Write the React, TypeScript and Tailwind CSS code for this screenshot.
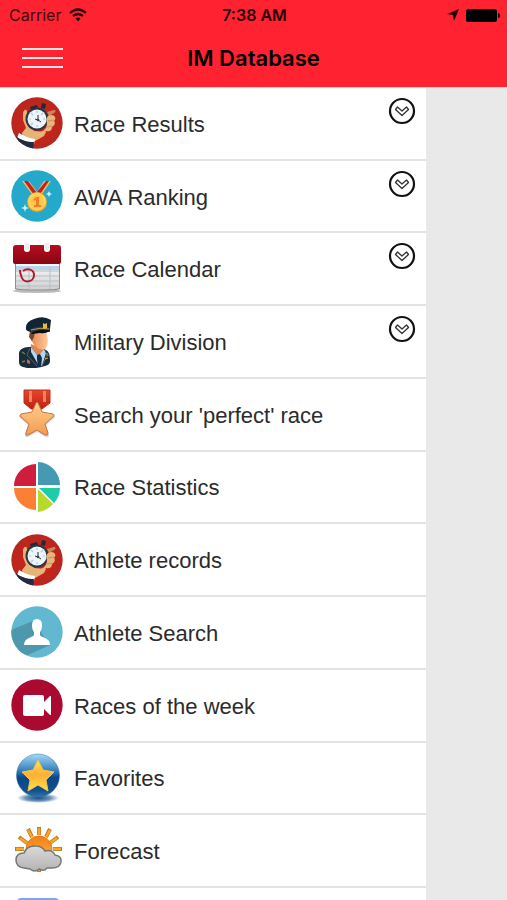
import React from "react";

function StopwatchIcon() {
  return (
    <svg viewBox="0 0 52 52" className="size-[52px]" aria-hidden="true">
      <defs>
        <clipPath id="watchDisc">
          <circle cx="26" cy="26" r="25.7" />
        </clipPath>
        <radialGradient id="watchRed">
          <stop offset="0.6" stopColor="#c5241c" />
          <stop offset="1" stopColor="#b5281f" />
        </radialGradient>
      </defs>
      <circle cx="26" cy="26" r="25.7" fill="url(#watchRed)" />
      <g clipPath="url(#watchDisc)">
        <path d="M12 16c1-4 4-4 4-1l1 8 6 11 12 1-2 4-7 4-4 2-10-5-1-4 4-5-3-8z" fill="#e6b377" />
        <path d="M8 36q8 5 16 6l-1 5L6 41z" fill="#fff" />
        <path d="M5 39c5 5 12 6 18 6l-1 9H8z" fill="#202c44" />
        <path d="m31 6 4 1-1 5-4-1zM19 10l7-2 1 3-7 2z" fill="#222936" />
        <circle cx="26" cy="22" r="11.500" fill="#2c3440" />
        <circle cx="26" cy="22" r="9.500" fill="#edf5fb" />
        <g stroke="#a5cce4" strokeWidth="1.200">
          <path d="M26 14v2M26 28v2M18 22h2M32 22h2M20 16l2 2M32 16l-2 2M20 28l2-2" />
        </g>
        <path d="m24 22 3 1 3 2M27 23v-5" stroke="#27313d" strokeWidth="1" fill="none" />
        <circle cx="27" cy="23" r="1.300" fill="#354352" />
        <path d="m36 15 7-2c2 0 2 2 0 3l-5 3z" fill="#c98858" />
        <path d="M37 19c3-2 6-1 7 1 1 2-1 4-1 4 2 2 0 5-2 6 0 4-3 5-6 4-2 4-8 7-12 4l9-4c3-2 4-5 4-8-1-2-1-5 1-7z" fill="#e8b67a" />
        <path d="m37 24 6-1M36 30l5-1" stroke="#cb925b" strokeWidth="1" />
      </g>
    </svg>
  );
}

function RankingIcon() {
  return (
    <svg viewBox="0 0 52 52" className="size-[52px]" aria-hidden="true">
      <circle cx="26" cy="26" r="25.700" fill="#25a9cb" />
      <path d="m11 11 7 0 9 12-4 4zM33 11h7L29 27l-4-4z" fill="#f1bc4f" />
      <path d="m13 11 4 0 9 12-3 2zM35 11h3L28 26l-3-3z" fill="#c51f2c" />
      <circle cx="26" cy="32" r="10" fill="#eda72c" />
      <circle cx="26" cy="31.500" r="9" fill="#ffd65a" />
      <circle cx="26" cy="32" r="7" fill="#ffc847" />
      <path d="m22.500 29 3-2h2.500v8h2v2h-7v-2h2v-5l-2 1z" fill="#ef7f2d" />
      <path d="m14 34 1 3 3 1-3 1-1 3-1-3-3-1 3-1zM38 21l1 2 2 1-2 1-1 2-1-2-2-1 2-1z" fill="#c5f4fc" />
    </svg>
  );
}

function CalendarIcon() {
  return (
    <svg viewBox="0 0 52 52" className="size-[52px]" aria-hidden="true">
      <defs>
        <linearGradient id="calRed" x2="0" y2="1">
          <stop stopColor="#b50e20" />
          <stop offset="1" stopColor="#870611" />
        </linearGradient>
        <linearGradient id="calPage" x2="0" y2="1">
          <stop stopColor="#f8fafc" />
          <stop offset="1" stopColor="#ced0d1" />
        </linearGradient>
      </defs>
      <ellipse cx="26" cy="48" rx="24" ry="2" fill="#bbb" />
      <path d="M4 20h45v26c0 2-45 2-45 0z" fill="#8c8e90" />
      <path d="M5 20h43v25c0 2-43 2-43 0z" fill="url(#calPage)" />
      <path d="M5 23h43v4H5z" fill="#b9d6e9" />
      <path d="M5 28h43M5 33h43M5 38h43M5 43h43M18 24v22M39 24v22" stroke="#b9bec2" />
      <path d="M2 5q0-3 3-3h8v4q0 3 3 3t3-3V2h14v4q0 3 3 3t3-3V2h8q3 0 3 3v14q0 2-2 2H4q-2 0-2-2z" fill="url(#calRed)" />
      <path d="M14 0h4v6q-2 3-4 0zM34 0h4v6q-2 3-4 0z" fill="#eee" />
      <path d="M9 27q0 3 1 5c1 9 13 8 13 0 0-6-7-7-11-4" fill="none" stroke="#b21928" strokeWidth="2" />
    </svg>
  );
}

function OfficerIcon() {
  return (
    <svg viewBox="0 0 52 52" className="size-[52px]" aria-hidden="true">
      <defs>
        <linearGradient id="face">
          <stop stopColor="#e88752" />
          <stop offset="1" stopColor="#ffc99c" />
        </linearGradient>
      </defs>
      <path d="m20 28 13 5 1 8-7 4-8-10z" fill="#dd8653" />
      <path d="M8 37c1-5 6-6 12-6l7 9 6-7c5 2 6 5 6 12q0 4-5 5-13 4-22 1-4-1-4-5 0-4 0-9z" fill="#182c3c" />
      <path d="m20 31 7 9 6-7 2 4-4 13h-3l-8-14z" fill="#b6d5ef" />
      <path d="m26 39 3-1 2 4-1 9h-3l-1-8z" fill="#152d45" />
      <path d="m19 32-3 7 10 11M34 34l2 5-5 11" fill="none" stroke="#52616b" />
      <path d="M21 16h14c3 7 2 14-1 17q-5 2-10-3l-4-6z" fill="url(#face)" />
      <path d="M19 15h5l-1 6-2 4-3-4z" fill="#76462d" />
      <path d="M15 13q-1-7 8-10 9-4 17 1l-1 9q-11-2-19 3-5-1-5-3z" fill="#102434" />
      <path d="M19 13q9-4 20-1v4q-10-2-18 1z" fill="#293849" />
      <path d="M20 17q8-4 19-3-3 4-10 3l-8 1z" fill="#080f18" />
      <path d="M20 14q9-3 18-1" stroke="#bf9a32" strokeWidth="1" fill="none" />
      <path d="m32 7 2 1 2-1v5l-2 1-2-1z" fill="#e7ba39" />
      <path d="m11 36 3 2M36 37l1 3M11 46l3-1" stroke="#71882f" strokeWidth="1.500" />
      <path d="m16 43 3 2v3l-3-1z" fill="#be6a58" />
      <path d="m34 43 3-1" stroke="#b7bd44" />
    </svg>
  );
}

function StarMedalIcon() {
  return (
    <svg viewBox="0 0 52 52" className="size-[52px]" aria-hidden="true">
      <defs>
        <linearGradient id="ribbonRed" x2="0" y2="1">
          <stop stopColor="#e94528" />
          <stop offset="1" stopColor="#bc2016" />
        </linearGradient>
        <linearGradient id="bronze" x2="0" y2="1">
          <stop stopColor="#ffd18f" />
          <stop offset="1" stopColor="#f39a50" />
        </linearGradient>
      </defs>
      <path d="M13 2h26v13l-8 6H20l-7-6z" fill="url(#ribbonRed)" stroke="#bd311f" />
      <path d="M18 3h3v11h-3zM32 3h3v11h-3z" fill="#f38762" />
      <path d="m26 14 5 10 12 2q2 1 0 3l-8 7 3 10q0 3-3 2l-9-5-9 5q-3 1-3-2l3-10-8-7q-2-2 0-3l12-2z" fill="#888" opacity="0.350" transform="translate(0 1)" />
      <path d="m25 15 1-1 1 1 4 9 11 2q2 1 0 3l-8 7 3 9q0 3-3 2l-8-5-9 5q-3 1-2-2l3-9-8-7q-2-2 0-3l11-2z" fill="url(#bronze)" stroke="#c77442" strokeWidth="1" />
    </svg>
  );
}

function PieIcon() {
  return (
    <svg viewBox="0 0 52 52" className="size-[52px]" aria-hidden="true">
      <path d="M25 25V3A22 22 0 0 0 3 25z" fill="#cf1d3d" />
      <path d="M27 24V1a23 23 0 0 1 22 23z" fill="#4699b3" />
      <path d="M25 27v22A22 22 0 0 1 3 27z" fill="#fb8035" />
      <path d="M28 27h21a23 23 0 0 1-6 15z" fill="#1fcca9" />
      <path d="M27 28v23q9-1 15-8z" fill="#b7d92d" />
    </svg>
  );
}

function AthleteIcon() {
  return (
    <svg viewBox="0 0 52 52" className="size-[52px]" aria-hidden="true">
      <defs>
        <clipPath id="athleteDisc">
          <circle cx="26" cy="26" r="25.700" />
        </clipPath>
      </defs>
      <circle cx="26" cy="26" r="25.700" fill="#62b8d0" />
      <path d="M22 15 0 24v23l17 2 22-10z" fill="#4d98ac" clipPath="url(#athleteDisc)" />
      <path d="M21 19q0-6 5-6t5 6q0 5-2 7v3q0 1 5 3 5 2 5 7H13q0-5 5-7 5-2 5-3v-3q-2-2-2-7z" fill="white" />
    </svg>
  );
}

function VideoIcon() {
  return (
    <svg viewBox="0 0 52 52" className="size-[52px]" aria-hidden="true">
      <circle cx="26" cy="26" r="25.700" fill="#aa0930" />
      <path d="M14 16h17q2 0 2 2v5l6-6h1v19h-1l-6-6v5q0 2-2 2H14q-2 0-2-2V18q0-2 2-2z" fill="#fff" />
    </svg>
  );
}

function FavoriteIcon() {
  return (
    <svg viewBox="0 0 52 52" className="size-[52px]" aria-hidden="true">
      <defs>
        <linearGradient id="ballBlue" x2="0" y2="1">
          <stop stopColor="#a2daf8" />
          <stop offset="0.400" stopColor="#337bb8" />
          <stop offset="0.550" stopColor="#0a458a" />
          <stop offset="0.850" stopColor="#11528c" />
          <stop offset="1" stopColor="#2c76ae" />
        </linearGradient>
        <linearGradient id="starGold" x2="0" y2="1">
          <stop stopColor="#ffe64f" />
          <stop offset="0.480" stopColor="#ffae35" />
          <stop offset="1" stopColor="#ffe34c" />
        </linearGradient>
        <radialGradient id="ballShade">
          <stop stopColor="#174f88" />
          <stop offset="0.600" stopColor="#6c92b8" />
          <stop offset="1" stopColor="#fff" />
        </radialGradient>
      </defs>
      <ellipse cx="27" cy="46" rx="21" ry="5" fill="url(#ballShade)" />
      <circle cx="27" cy="23.500" r="21.500" fill="url(#ballBlue)" stroke="#296c9e" strokeWidth="0.500" />
      <path d="m27 8 5 10 11 2-8 8 2 11-10-6-10 6 2-11-8-8 11-2z" fill="url(#starGold)" stroke="#f3c344" />
    </svg>
  );
}

function ForecastIcon() {
  return (
    <svg viewBox="0 0 52 52" className="size-[52px]" aria-hidden="true">
      <defs>
        <linearGradient id="sunGold" x2="0" y2="1">
          <stop stopColor="#f37b18" />
          <stop offset="1" stopColor="#ffc03b" />
        </linearGradient>
        <linearGradient id="cloudGray" x2="0" y2="1">
          <stop stopColor="#d9d9d9" />
          <stop offset="1" stopColor="#b4b4b4" />
        </linearGradient>
      </defs>
      <path d="M28 2v8M17 4l4 8M39 4l-4 8M8 12l8 6M47 12l-8 6M4 24h9M51 24h-9M28 41v6M17 42l2-3M39 42l-2-3" stroke="#b18032" strokeWidth="4" />
      <path d="M28 3v7M17 5l4 7M39 5l-4 7M9 13l7 5M46 13l-7 5M5 24h8M50 24h-8M28 41v5M17 41l2-2M39 41l-2-2" stroke="#ffa51c" strokeWidth="2.500" />
      <circle cx="28" cy="24" r="13" fill="url(#sunGold)" stroke="#e27d1d" />
      <path d="M13 43q-8-1-8-8t8-7q3-8 12-7 6 0 9 5 7-2 10 4 7 1 6 7t-9 6h-5q-3 4-8 1-4 4-9 0z" fill="url(#cloudGray)" stroke="#777" strokeWidth="1.500" />
    </svg>
  );
}

function ChevronBadge() {
  return (
    <svg viewBox="0 0 28 28" className="size-7" fill="none" aria-hidden="true">
      <circle cx="14" cy="14" r="12" stroke="#111" strokeWidth="2.200" />
      <path d="m7.500 12.500 2-2.500 4.500 4 4.500-4 2 2.500-6.500 6z" stroke="#333" strokeWidth="1.300" strokeLinejoin="round" />
    </svg>
  );
}

const items = [
  { label: "Race Results", Icon: StopwatchIcon, expandable: true },
  { label: "AWA Ranking", Icon: RankingIcon, expandable: true },
  { label: "Race Calendar", Icon: CalendarIcon, expandable: true },
  { label: "Military Division", Icon: OfficerIcon, expandable: true },
  { label: "Search your 'perfect' race", Icon: StarMedalIcon },
  { label: "Race Statistics", Icon: PieIcon },
  { label: "Athlete records", Icon: StopwatchIcon },
  { label: "Athlete Search", Icon: AthleteIcon },
  { label: "Races of the week", Icon: VideoIcon },
  { label: "Favorites", Icon: FavoriteIcon },
  { label: "Forecast", Icon: ForecastIcon },
];

export default function App() {
  return (
    <div className="flex h-screen flex-col overflow-hidden bg-[#e9e9e9] font-['Inter','Liberation_Sans',sans-serif] text-black">
      <header className="shrink-0 border-b border-[#ffccd0] bg-[#ff2230] pb-px">
        <div className="grid h-[30px] grid-cols-3 items-center pl-[9px] pr-[7px] text-base">
          <div className="flex items-center gap-2 text-[#40080c]">
            <span>Carrier</span>
            <svg viewBox="0 0 18 14" className="h-[14px] w-[18px]" fill="none" stroke="#260507" strokeWidth="2.200" aria-hidden="true">
              <path d="M1 5q8-7 16 0M4 8q5-4 10 0" />
              <path d="m6.500 10.500 2.500 3 2.500-3q-2.500-2-5 0z" fill="#260507" stroke="none" />
            </svg>
          </div>
          <span className="text-center font-semibold text-[#260507]">7:38 AM</span>
          <div className="flex items-center justify-end gap-[7px]">
            <svg viewBox="0 0 12 12" className="size-3" aria-hidden="true">
              <path d="M12 0 7 12 6 6 0 5z" fill="#260507" />
            </svg>
            <svg viewBox="0 0 34 13" className="h-[13px] w-[34px]" aria-hidden="true">
              <rect x="0" y="0" width="31" height="13" rx="2.500" />
              <path d="M32 4q2 0 2 2.500T32 9z" />
            </svg>
          </div>
        </div>
        <div className="grid h-14 grid-cols-[64px_1fr_64px] items-center">
          <button type="button" aria-label="Open menu" className="ml-[22px] flex w-[41px] flex-col gap-[7px]">
            <span className="h-[2px] w-full bg-[#ffe5e7]" />
            <span className="h-[2px] w-full bg-[#ffe5e7]" />
            <span className="h-[2px] w-full bg-[#ffe5e7]" />
          </button>
          <h1 className="text-center text-[22px] font-semibold leading-7">IM Database</h1>
        </div>
      </header>
      <nav aria-label="Main menu" className="flex min-h-0 w-[84%] flex-1 flex-col bg-white">
        <ul className="grid flex-1 auto-rows-fr">
          {items.map(({ label, Icon, expandable }) => (
            <li key={label} className="border-b-2 border-[#e3e3e3]">
              <button type="button" className="flex h-full w-full items-center gap-[11px] pl-[11px] pr-[10px] text-left">
                <Icon />
                <span className="flex-1 whitespace-nowrap pt-[3px] font-['Liberation_Sans',sans-serif] text-[22px] leading-7 text-[#2b2b2b]">{label}</span>
                {expandable && (
                  <span className="self-start pt-[9px]">
                    <ChevronBadge />
                  </span>
                )}
              </button>
            </li>
          ))}
        </ul>
        <div className="flex h-3 shrink-0 overflow-hidden pl-[17px] pt-[10px]">
          <span className="h-10 w-[42px] rounded-[4px] bg-[#7fa5ef]" />
        </div>
      </nav>
    </div>
  );
}
